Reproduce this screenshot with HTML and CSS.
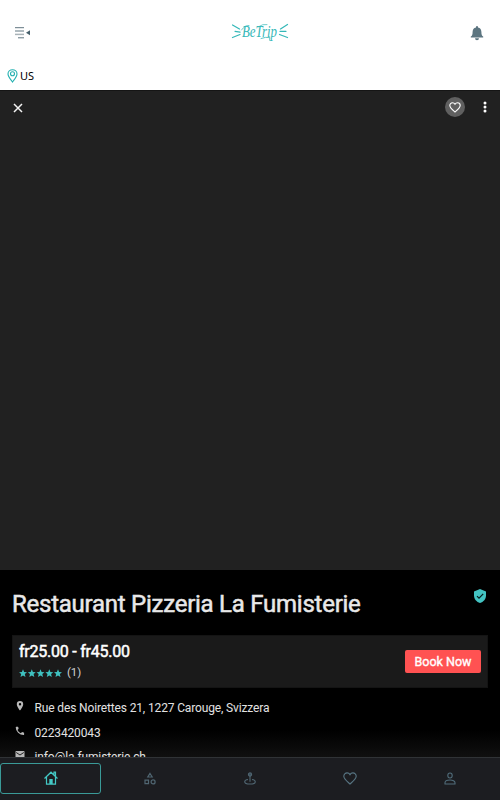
FILE: index.html
```
<!DOCTYPE html>
<html lang="en">
<head>
<meta charset="utf-8">
<title>BeTrip</title>
<link rel="stylesheet" href="styles.css">
</head>
<body>
<div class="app">
  <header class="topbar">
    <svg class="menu" width="16" height="12" viewBox="0 0 16 12" fill="none" stroke="#607681"><path d="M0 .7h9M0 4h9"/><path d="M0 7.4h9" stroke="#a9b3b8" stroke-width="1.5"/><path d="M3 10.8h6"/><path d="M15 3.200v5L11 5.700z" fill="#455f6b" stroke="none"/></svg>
    <svg class="logo" width="58" height="22" viewBox="0 0 58 22"><g fill="none" stroke="#35b8b8" stroke-width="1.25" stroke-linecap="round"><path d="M1.500 3l7 4M4 9.300l5 .8M1.500 15.500l7.500-3M56.500 2.500l-7 4.500M55 9.300h-6M56.500 15.500l-8-3"/><path d="M30 16.500q5-2 9-.8q-1 1.500 0 3" stroke-width=".8"/><path d="M10.500 8q4-5.500 7.500-4.500M27 5q5-3.500 9-2.500" stroke-width=".7"/></g><text class="logo-text" x="11" y="14.500" textLength="35" lengthAdjust="spacingAndGlyphs">BeTrip</text></svg>
    <svg class="bell" width="14" height="15" viewBox="0 0 14 15"><path d="M6 1.500V1a1 1 0 0 1 2 0v.5c2.400.5 3.400 2.200 3.400 4.500 0 2.700.5 3.700 1.800 4.600v.9H.8v-.9C2.100 9.700 2.600 8.700 2.600 6 2.600 3.700 3.600 2 6 1.500zM5 12.300h4a2 2 0 0 1-4 0z" fill="#5c7580"/></svg>
  </header>
  <div class="location">
    <svg width="11" height="14" viewBox="0 0 11 14" fill="none" stroke="#22b0b0" stroke-width="1.1"><path d="M5.500 13C4 10.700 1 7.700 1 5a4.500 4.300 0 0 1 9 0c0 2.700-3 5.700-4.500 8z"/><circle cx="5.500" cy="4.800" r="2"/></svg>
    <span>US</span>
  </div>
  <main>
    <section class="hero">
      <svg class="close" width="10" height="10" viewBox="0 0 10 10" stroke="#f4f4f4" stroke-width="1.500"><path d="M1 1l8 8M9 1L1 9"/></svg>
      <div class="actions">
        <span class="fav"><svg width="12" height="11" viewBox="0 0 12 11" fill="none" stroke="#fff" stroke-width="1.100"><path d="M6 10C3 7.500.8 5.700.8 3.500A2.700 2.700 0 0 1 3.500.8C4.600.8 5.500 1.400 6 2.200 6.500 1.400 7.400.8 8.500.8a2.700 2.700 0 0 1 2.700 2.700C11.200 5.700 9 7.500 6 10z"/></svg></span>
        <svg width="4" height="12" viewBox="0 0 4 12" fill="#fff"><circle cx="2" cy="2" r="1.500"/><circle cx="2" cy="6" r="1.500"/><circle cx="2" cy="10" r="1.500"/></svg>
      </div>
    </section>
    <section class="details">
      <div class="heading">
        <h1>Restaurant Pizzeria La Fumisterie</h1>
        <svg class="shield" width="12" height="14" viewBox="0 0 12 14"><path d="M6 0l6 2.500v4C12 10 9.500 13 6 14 2.500 13 0 10 0 6.500v-4z" fill="#43c3c2"/><path d="M3 7.200l2 2 4.200-4.300" fill="none" stroke="#071a1a" stroke-width="1.200"/></svg>
      </div>
      <div class="card">
        <div>
          <div class="price">fr25.00 - fr45.00</div>
          <div class="rating">
            <svg width="44" height="9" viewBox="0 0 44 9" fill="#3fc1c0"><defs><path id="star" d="M4 .3l1.100 2.600 2.900.3-2.200 1.900.7 2.800L4 6.400 1.500 7.900l.7-2.800L0 3.200l2.900-.3z"/></defs><use href="#star"/><use href="#star" x="8.800"/><use href="#star" x="17.500"/><use href="#star" x="26.300"/><use href="#star" x="35"/></svg>
            <span>(1)</span>
          </div>
        </div>
        <button class="book">Book Now</button>
      </div>
      <ul class="contacts">
        <li><svg width="10" height="10" viewBox="0 0 10 10"><path fill-rule="evenodd" d="M5 0a3.200 3.200 0 0 1 3.200 3.200C8.200 5.500 5 9.500 5 9.500S1.800 5.500 1.800 3.200A3.200 3.200 0 0 1 5 0zm0 2a1.200 1.200 0 1 0 0 2.400A1.200 1.200 0 0 0 5 2z"/></svg><span class="address">Rue des Noirettes 21, 1227 Carouge, Svizzera</span></li>
        <li><svg width="10" height="10" viewBox="0 0 10 10"><path d="M1.200.8h1.700q.3 0 .4.4l.3 1.500-1.100 1.200A7 7 0 0 0 5.900 7.200L7 6.100l1.700.3q.4.100.4.400v1.900q0 .4-.4.400A8 8 0 0 1 .7 1.200q0-.4.500-.4z"/></svg><span class="phone">0223420043</span></li>
        <li><svg width="10" height="10" viewBox="0 0 10 10"><rect x=".5" y="1" width="9" height="8" rx=".8"/><path d="M1.200 2.500L5 5l3.800-2.500" fill="none" stroke="#111" stroke-width=".9"/></svg><span class="mail">info@la-fumisterie.ch</span></li>
      </ul>
    </section>
  </main>
  <nav>
    <a class="tab active"><svg width="14" height="14" viewBox="0 0 14 14" fill="none" stroke="#43c8c5" stroke-width="1.200"><path d="M.5 7.500L7 1.200l6.500 6.300M10 3.500V1.200h1.500v4M2.500 6v7.200h9V6"/><path d="M5.300 8h3.400v5H5.300z" fill="#43c8c5" stroke="none"/></svg></a>
    <a class="tab"><svg width="12" height="13" viewBox="0 0 12 13" fill="none" stroke="#506672" stroke-width="1.200"><path d="M6 1.500L8.200 5H3.800zM1 8.200h3.500v3.500H1z"/><circle cx="9.100" cy="9.900" r="2"/></svg></a>
    <a class="tab"><svg width="12" height="13" viewBox="0 0 12 13" fill="none" stroke="#506672" stroke-width="1.100"><circle cx="6" cy="2.500" r="1.600" fill="#3b505e"/><path d="M6 4v5.700M4 7.500C1.800 7.800.7 8.600.7 9.700c0 1.300 2.200 2.300 5.300 2.300s5.300-1 5.300-2.300c0-1.100-1.100-1.900-3.300-2.200"/></svg></a>
    <a class="tab"><svg width="14" height="13" viewBox="0 0 14 13" fill="none" stroke="#587684" stroke-width="1.100"><path d="M7 12C3.500 8.800.8 6.800.8 4.200A3.300 3.300 0 0 1 4.100.9C5.400.9 6.400 1.600 7 2.600 7.600 1.600 8.600.9 9.900.9a3.300 3.300 0 0 1 3.300 3.300C13.200 6.800 10.500 8.800 7 12z"/></svg></a>
    <a class="tab"><svg width="12" height="13" viewBox="0 0 12 13" fill="none" stroke="#506c7a" stroke-width="1.100"><ellipse cx="6" cy="3.500" rx="2.200" ry="2.500"/><path d="M1 12v-1.200C1 9 3.300 8 6 8s5 1 5 2.800V12z"/></svg></a>
  </nav>
</div>
</body>
</html>
```
FILE: styles.css
```
* { box-sizing: border-box; }
body { margin: 0; font-family: Roboto, "Liberation Sans", sans-serif; background: #000; }
svg { display: block; flex: none; }
.app { width: 500px; height: 800px; display: flex; flex-direction: column; overflow: hidden; }
.topbar { height: 64px; flex: none; background: #fff; display: flex; justify-content: space-between; align-items: center; padding: 2px 16px 0 15px; }
.menu { margin-top: -1px; }
.logo { margin-left: 186px; margin-right: 168px; }
.logo-text { font: italic 16px "Liberation Serif", serif; fill: #35b8b8; }
.location { height: 26px; flex: none; background: #fff; display: flex; align-items: center; gap: 2px; padding: 0 7px 3px; font: 11px "Noto Sans", sans-serif; color: #000; }
main { flex: 1; min-height: 0; overflow: hidden; background: linear-gradient(#000 96%, #101010); }
.hero { height: 480px; background: #212121; border-top: 1px solid #151515; display: flex; justify-content: space-between; padding: 6px 13px 0 12.500px; }
.close { margin-top: 5.500px; }
.actions { height: 20px; display: flex; align-items: center; gap: 18px; }
.fav { width: 20px; height: 20px; border-radius: 50%; background: #606060; display: grid; place-items: center; }
.details { padding: 0 12px; }
.heading { height: 65px; display: flex; justify-content: space-between; padding: 19px 2px 0 0; }
h1 { margin: 0; font-size: 24px; line-height: 30px; font-weight: 400; color: #e8e8e8; -webkit-text-stroke: .5px #e8e8e8; letter-spacing: -.25px; white-space: nowrap; }
.card { height: 53px; background: #1a1a1a; border: 1px solid #141414; display: flex; align-items: center; justify-content: space-between; padding: 0 6px 0 6px; }
.price { font-size: 16px; line-height: 20px; font-weight: 400; -webkit-text-stroke: .5px #fff; letter-spacing: -.23px; color: #fff; }
.rating { display: flex; align-items: center; gap: 4px; height: 20px; font-size: 11.500px; letter-spacing: -.1px; color: #d0d0d0; }
.rating svg { margin-top: 3px; }
.book { width: 76px; height: 23px; padding: 0; border: 0; border-radius: 2px; background: #ff5252; color: #fff; font: 400 12.5px Roboto, sans-serif; -webkit-text-stroke: .35px #fff; }
.contacts { list-style: none; margin: 0; padding: 8px 3px; font-size: 12px; letter-spacing: -.14px; color: #e2e2e2; }
.contacts li { height: 24.500px; display: flex; align-items: center; gap: 9.500px; }
.contacts svg { fill: #b8b8b8; margin-top: -4px; }
nav { height: 43px; flex: none; display: grid; grid-template-columns: repeat(5, 1fr); background: #1c1d21; border-top: 1px solid #303336; padding: 5px 0 6px; }
.tab { display: grid; place-items: center; padding-bottom: 1px; }
.active { border: 1px solid #3a9a98; border-radius: 3px; margin-right: -1px; }
```
